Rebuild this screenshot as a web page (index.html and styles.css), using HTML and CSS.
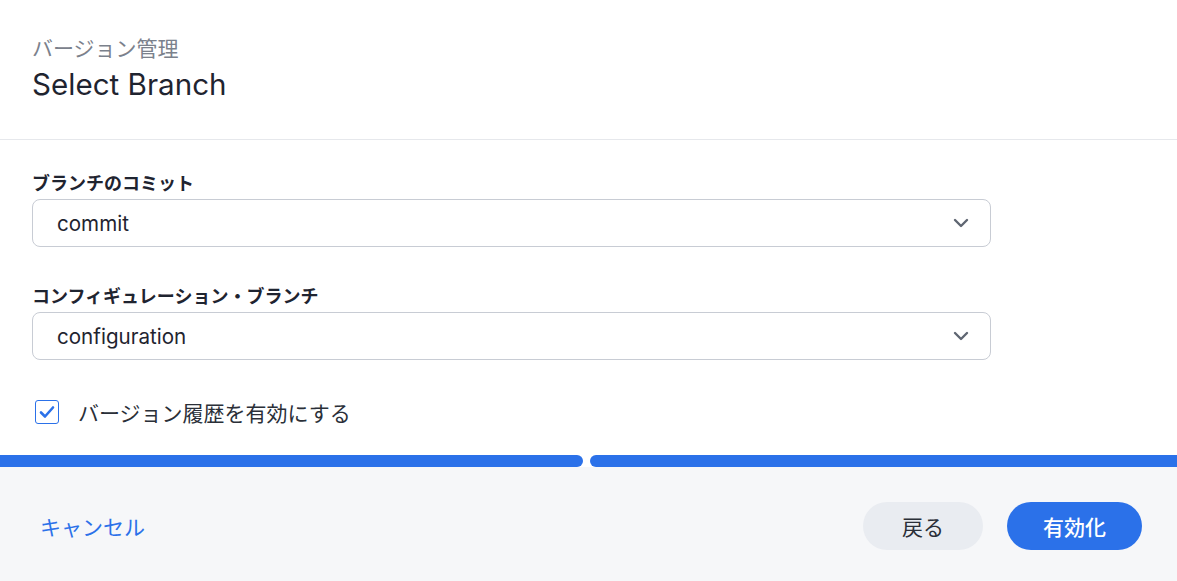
FILE: index.html
```html
<!DOCTYPE html>
<html lang="ja">
<head>
<meta charset="utf-8">
<link rel="stylesheet" href="styles.css">
</head>
<body>
<div class="dialog">
  <header class="head">
    <div class="sub">バージョン管理</div>
    <h1 class="title">Select Branch</h1>
  </header>
  <main class="body">
    <div class="field">
      <label class="label">ブランチのコミット</label>
      <div class="select">
        <span>commit</span>
        <svg class="chev" width="16" height="10" viewBox="0 0 16 10"><path d="M2 2l6 6 6-6" fill="none" stroke="#5f6672" stroke-width="2.4" stroke-linecap="round" stroke-linejoin="round"/></svg>
      </div>
    </div>
    <div class="field">
      <label class="label">コンフィギュレーション・ブランチ</label>
      <div class="select">
        <span>configuration</span>
        <svg class="chev" width="16" height="10" viewBox="0 0 16 10"><path d="M2 2l6 6 6-6" fill="none" stroke="#5f6672" stroke-width="2.4" stroke-linecap="round" stroke-linejoin="round"/></svg>
      </div>
    </div>
    <div class="check-row">
      <span class="check">
        <svg width="16" height="14" viewBox="0 0 16 14"><path d="M2 7.5l4 4L14 2.5" fill="none" stroke="#2b71e9" stroke-width="2.6" stroke-linecap="round" stroke-linejoin="round"/></svg>
      </span>
      <span class="check-text">バージョン履歴を有効にする</span>
    </div>
  </main>
  <div class="progress">
    <div class="seg seg-a"></div>
    <div class="seg seg-b"></div>
  </div>
  <footer class="foot">
    <a class="cancel">キャンセル</a>
    <div class="actions">
      <button class="btn btn-back">戻る</button>
      <button class="btn btn-primary">有効化</button>
    </div>
  </footer>
</div>
</body>
</html>
```

FILE: styles.css
```css
* { box-sizing: border-box; }
html, body { margin: 0; padding: 0; }
body {
  width: 1177px;
  height: 581px;
  overflow: hidden;
  background: #ffffff;
  font-family: Inter, "Noto Sans CJK JP", sans-serif;
  color: #1f2430;
}
.dialog {
  display: flex;
  flex-direction: column;
  height: 581px;
}
.head {
  padding: 34px 32px 0;
  height: 140px;
  border-bottom: 1px solid #e6e8ec;
}
.sub {
  font-family: "Noto Sans CJK JP", sans-serif;
  font-size: 21px;
  line-height: 26px;
  color: #7b818c;
}
.title {
  margin: 7px 0 0;
  font-size: 29.6px;
  line-height: 34px;
  font-weight: 400;
  color: #1f2430;
}
.body {
  padding: 31px 32px 0;
  height: 315px;
}
.field {
  width: 959px;
  margin-bottom: 37px;
}
.field:nth-child(2) { margin-bottom: 39px; }
.label {
  display: block;
  font-family: "Noto Sans CJK JP", sans-serif;
  font-size: 18px;
  line-height: 22px;
  font-weight: 700;
  color: #1f2430;
  margin-bottom: 6px;
}
.select {
  height: 48px;
  border: 1px solid #c8ccd4;
  border-radius: 8px;
  display: flex;
  align-items: center;
  justify-content: space-between;
  padding: 0 21px 0 24px;
  font-size: 20.6px;
  color: #1f2430;
}
.chev { display: block; }
.check-row {
  display: flex;
  align-items: center;
  padding-left: 3px;
}
.check {
  width: 24px;
  height: 24px;
  border: 1.5px solid #2b71e9;
  border-radius: 3px;
  display: flex;
  align-items: center;
  justify-content: center;
  margin-right: 19px;
}
.check-text {
  font-family: "Noto Sans CJK JP", sans-serif;
  font-size: 21px;
  line-height: 26px;
  color: #2a2f38;
}
.progress {
  display: flex;
  gap: 7px;
  height: 12px;
}
.seg { background: #2b71e9; height: 12px; }
.seg-a { width: 583px; border-radius: 0 6px 6px 0; }
.seg-b { flex: 1; border-radius: 6px 0 0 6px; }
.foot {
  flex: 1;
  background: #f6f7f9;
  display: flex;
  align-items: center;
  justify-content: space-between;
  padding: 4px 35px 0 40px;
}
.cancel {
  font-family: "Noto Sans CJK JP", sans-serif;
  font-size: 21px;
  color: #2b71e9;
}
.actions {
  display: flex;
  gap: 24px;
}
.btn {
  height: 48px;
  border: none;
  border-radius: 24px;
  font-family: "Noto Sans CJK JP", sans-serif;
  font-size: 21px;
}
.btn-back {
  width: 120px;
  background: #e9ecf1;
  color: #2a2f38;
}
.btn-primary {
  width: 135px;
  background: #2b71e9;
  color: #ffffff;
  font-weight: 500;
}
```
